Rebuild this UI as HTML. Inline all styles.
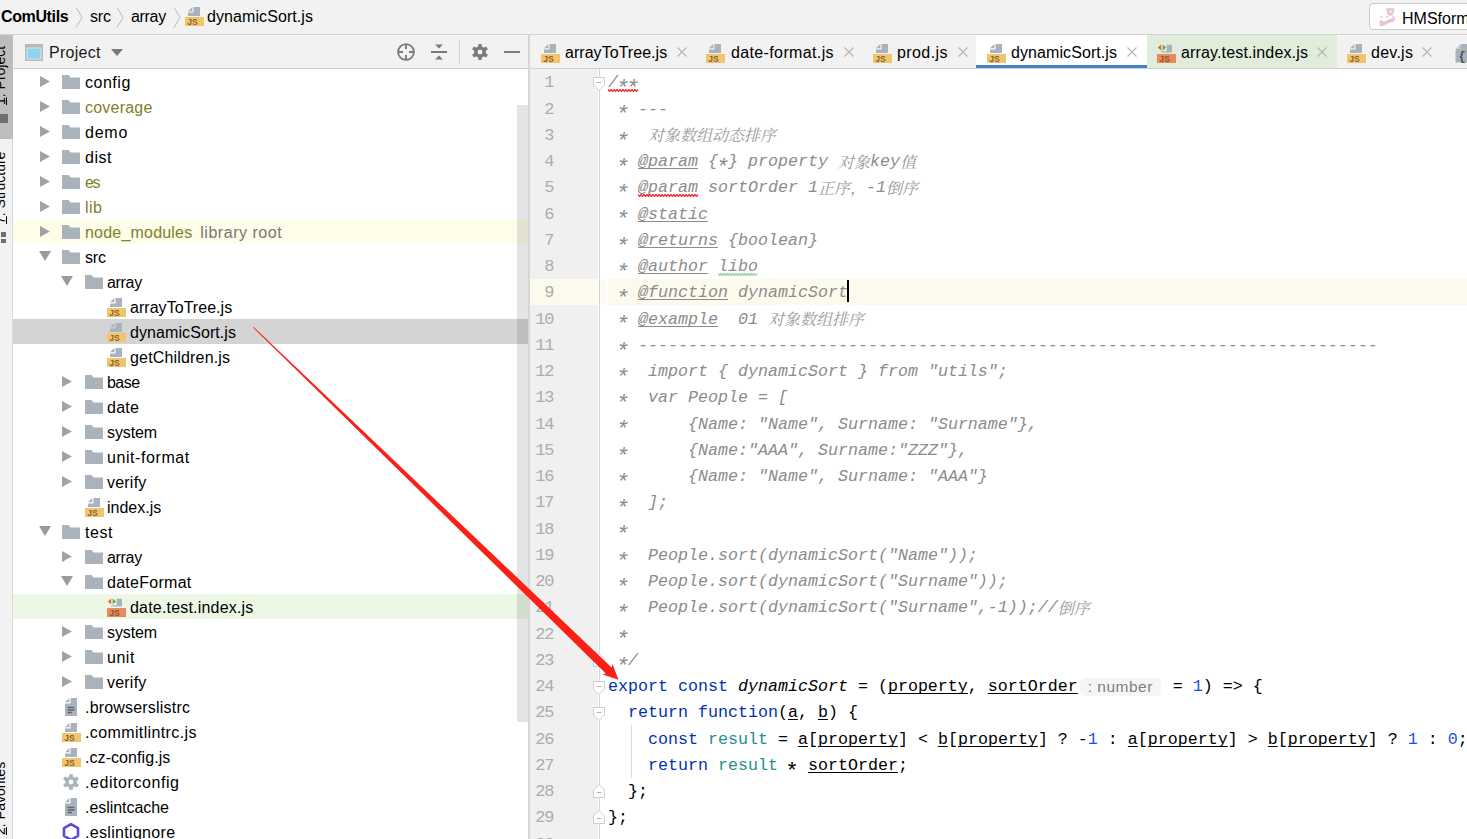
<!DOCTYPE html><html lang="zh"><head><meta charset="utf-8"><title>ComUtils - dynamicSort.js</title><style>
*{box-sizing:border-box;margin:0;padding:0}
html,body{width:1467px;height:839px;overflow:hidden;background:#fff}
body{position:relative;font-family:"Liberation Sans", "Noto Sans CJK SC", sans-serif;font-size:16px;color:#000}
.abs{position:absolute}
#top{left:0;top:0;width:1467px;height:35px;background:#f2f2f2;border-bottom:1px solid #d1d1d1}
#strip{left:0;top:35px;width:13px;height:804px;background:#f2f2f2;border-right:1px solid #dadada}
#strip .sel{left:0;top:0;width:13px;height:104px;background:#bdbdbd}
#phead{left:13px;top:35px;width:515px;height:34px;background:#f2f2f2;border-bottom:1px solid #d1d1d1}
#tree{left:13px;top:69px;width:515px;height:770px;background:#fff;overflow:hidden}
.row{position:absolute;left:0;width:515px;height:25px;line-height:25px;white-space:nowrap}
.row .t{position:absolute;top:0.8px;font-size:16px}
.olive{color:#80802d}
.gray{color:#787878}
#divider{left:528px;top:35px;width:2px;height:804px;background:#d6d6d6}
#tabs{left:530px;top:35px;width:937px;height:34px;background:#f2f2f2;border-bottom:1px solid #d1d1d1;overflow:hidden}
.tab{position:absolute;top:0;height:33px;line-height:33px;font-size:16px;white-space:nowrap}
.tab .x{position:absolute;top:0;color:#9a9a9a;font-size:15px}
#gutter{left:530px;top:69px;width:68px;height:770px;background:#f0f0f0}
#gline{left:599px;top:69px;width:1px;height:770px;background:#d4d4d4}
#code{left:530px;top:69px;width:937px;height:770px;overflow:hidden;font-family:"Liberation Mono", "Noto Serif CJK SC", monospace;font-size:16.667px}
.ln{position:absolute;left:0;width:23.3px;text-align:right;color:#adadad;font-size:17px;letter-spacing:-1.2px;height:26.25px;line-height:26.25px;white-space:pre}
.cl{position:absolute;left:78px;height:26.25px;line-height:26.25px;white-space:pre;color:#000}
.c{color:#8c8c8c;font-style:italic}
.cj{font-family:"Noto Serif CJK SC",serif;font-size:16px;font-style:italic;color:#9a9a9a;display:inline-block;text-align:center;vertical-align:baseline;line-height:20px;position:relative;top:1.5px}
.tag{text-decoration:underline;text-decoration-thickness:1px;text-underline-offset:2px;text-decoration-skip-ink:none}
.kw{color:#0033b3}
.num{color:#1750eb}
.lv{color:#248f8f}
.u{text-decoration:underline;text-decoration-thickness:1px;text-underline-offset:2px;text-decoration-skip-ink:none}
.fn{font-style:italic}
.hint{display:inline-block;width:81px;height:18px;margin:0 2px;background:#f5f5f5;border-radius:5px;font-family:"Liberation Sans", "Noto Sans CJK SC", sans-serif;font-size:15.5px;letter-spacing:0.5px;color:#7f7f7f;line-height:18.5px;height:18.5px;text-align:center;position:relative;top:0.6px;font-style:normal}
</style><style>
.wv-r{text-decoration:underline wavy #e8433a;text-decoration-thickness:1px;text-underline-offset:1.5px;text-decoration-skip-ink:none}
.tag.wv-r{text-decoration:underline wavy #e8433a;text-decoration-thickness:1px;text-underline-offset:1.5px}
.wv-g{text-decoration:underline wavy #8fc08a;text-decoration-thickness:1px;text-underline-offset:1.5px;text-decoration-skip-ink:none}
.as{font-size:22.5px;line-height:0;margin:0 -0.9px 0 -2.6px;position:relative;top:7.8px}
.caret{display:inline-block;width:2px;height:22px;background:#000;vertical-align:-5px;margin-left:-1px}
</style></head><body>
<div id="top" class="abs">
<span class="abs" style="left:1px;top:0;line-height:33px;font-weight:bold;font-size:16px;letter-spacing:-0.376px;">ComUtils</span>
<svg class="abs" style="left:75px;top:7px" width="8" height="21" viewBox="0 0 8 21"><path d="M1 0.5L7 10.5L1 20.5" fill="none" stroke="#b9b9b9" stroke-width="1"/></svg>
<span class="abs" style="left:90px;top:0;line-height:33px;font-size:16px;letter-spacing:-0.214px;">src</span>
<svg class="abs" style="left:116px;top:7px" width="8" height="21" viewBox="0 0 8 21"><path d="M1 0.5L7 10.5L1 20.5" fill="none" stroke="#b9b9b9" stroke-width="1"/></svg>
<span class="abs" style="left:131px;top:0;line-height:33px;font-size:16px;letter-spacing:-0.313px;">array</span>
<svg class="abs" style="left:173px;top:7px" width="8" height="21" viewBox="0 0 8 21"><path d="M1 0.5L7 10.5L1 20.5" fill="none" stroke="#b9b9b9" stroke-width="1"/></svg>
<svg class="abs" style="left:185px;top:7px" width="19" height="19" viewBox="0 0 19 19"><path d="M8.5 0H15V9H3V5.5H8.5z" fill="#aab3bb"/><path d="M7.3 0V4.3H3z" fill="#aab3bb"/><rect x="0" y="10" width="19" height="9" fill="#f2c46e"/><text x="2.2" y="17.6" font-family="Liberation Sans,sans-serif" font-weight="bold" font-size="8.5" fill="#6e5320" fill-opacity="0.85">JS</text></svg>
<span class="abs" style="left:207px;top:0;line-height:33px;font-size:16px;letter-spacing:0.083px;">dynamicSort.js</span>
<div class="abs" style="left:1369px;top:3px;width:110px;height:27px;background:#fff;border:1px solid #c9c9c9;border-radius:4px"></div>
<svg class="abs" style="left:1378.8px;top:7.9px" width="17" height="19" viewBox="0 0 17 19"><path d="M7.1 0.2H15.6L13.8 7.5H8.8z" fill="#e9c3d2"/><path d="M10.3 2.8H13L11.7 5.6z" fill="#fff"/><circle cx="2.3" cy="9" r="1.1" fill="#e9c3d2"/><circle cx="8.3" cy="9" r="1.1" fill="#e9c3d2"/><circle cx="14.2" cy="9" r="1.1" fill="#e9c3d2"/><path d="M0.5 15C0.5 12 2 11.3 3 12.5C4 14 6 14 8 12.2C10 10.5 13 10.8 16 9.6C16.6 13 14 14.2 11 14.7C8 15.2 6 17.6 3 18.1C1 18.4 0.3 17 0.5 15z" fill="#e9c3d2"/></svg>
<span class="abs" style="left:1402px;top:2px;line-height:33px;font-size:16px">HMSform</span>
</div>
<div id="strip" class="abs"><div class="sel abs"></div>
<div class="abs" style="left:-8px;top:70px;transform-origin:0 0;transform:rotate(-90deg);font-size:14px;white-space:nowrap;line-height:16px"><u>1</u>: Project</div>
<div class="abs" style="left:0;top:79px;width:8px;height:9px;background:#6e6e6e"></div>
<div class="abs" style="left:-8px;top:189px;transform-origin:0 0;transform:rotate(-90deg);font-size:14px;white-space:nowrap;line-height:16px"><u>7</u>: Structure</div>
<div class="abs" style="left:1px;top:197px;width:5px;height:4.5px;background:#6e6e6e"></div><div class="abs" style="left:1px;top:203.5px;width:5px;height:4.5px;background:#6e6e6e"></div>
<div class="abs" style="left:-8px;top:800px;transform-origin:0 0;transform:rotate(-90deg);font-size:14px;white-space:nowrap;line-height:16px"><u>2</u>: Favorites</div>
</div>
<div id="phead" class="abs">
<svg class="abs" style="left:12px;top:9px" width="18" height="17" viewBox="0 0 18 17"><rect x="0" y="0" width="18" height="17" fill="#b2bac1"/><rect x="1.5" y="3.5" width="15" height="12" fill="#dde5ea"/><rect x="2.5" y="4.5" width="13" height="10" fill="#8fd3ec"/></svg>
<span class="abs" style="left:36px;top:1px;line-height:34px;font-size:16px;color:#1a1a1a;letter-spacing:0.284px;">Project</span>
<svg class="abs" style="left:98px;top:14px" width="12" height="7" viewBox="0 0 12 7"><path d="M0 0H12L6 7z" fill="#7a7a7a"/></svg>
<svg class="abs" style="left:383px;top:7px" width="20" height="20" viewBox="0 0 20 20"><circle cx="10" cy="10" r="7.9" fill="none" stroke="#7a7a7a" stroke-width="1.8"/><path d="M10 2v5M10 13v5M2 10h5M13 10h5" stroke="#7a7a7a" stroke-width="1.9"/></svg>
<svg class="abs" style="left:418px;top:8px" width="16" height="18" viewBox="0 0 16 18"><path d="M0 9h16" stroke="#7a7a7a" stroke-width="2"/><path d="M4 1.5h8L8 5.5zM4 16.5h8L8 12.5z" fill="#7a7a7a"/></svg>
<div class="abs" style="left:446px;top:5px;width:1px;height:24px;background:#d1d1d1"></div>
<svg class="abs" style="left:459px;top:9px" width="16" height="16" viewBox="0 0 16 16"><path d="M6.58 0.13L9.42 0.13L9.56 2.62L11.88 3.96L14.11 2.84L15.53 5.29L13.44 6.66L13.44 9.34L15.53 10.71L14.11 13.16L11.88 12.04L9.56 13.38L9.42 15.87L6.58 15.87L6.44 13.38L4.12 12.04L1.89 13.16L0.47 10.71L2.56 9.34L2.56 6.66L0.47 5.29L1.89 2.84L4.12 3.96L6.44 2.62zM8 5.3a2.7 2.7 0 1 0 0.001 0z" fill="#7a7a7a" fill-rule="evenodd" stroke="#7a7a7a" stroke-width="0.6" stroke-linejoin="round"/></svg>
<div class="abs" style="left:491px;top:16px;width:16px;height:2px;background:#7a7a7a"></div>
</div>
<div id="tree" class="abs">
<div class="row" style="top:0px;">
<svg class="abs" style="left:27px;top:7px" width="10" height="11" viewBox="0 0 10 11"><path d="M0 0L10 5.5L0 11z" fill="#a2a2a2"/></svg>
<svg class="abs" style="left:49px;top:6px" width="18" height="14" viewBox="0 0 18 14"><path d="M0 0h6.5l2 2.5H18V14H0z" fill="#aab3bb"/></svg>
<span class="t " style="left:72px;letter-spacing:0.519px;">config</span>
</div>
<div class="row" style="top:25px;">
<svg class="abs" style="left:27px;top:7px" width="10" height="11" viewBox="0 0 10 11"><path d="M0 0L10 5.5L0 11z" fill="#a2a2a2"/></svg>
<svg class="abs" style="left:49px;top:6px" width="18" height="14" viewBox="0 0 18 14"><path d="M0 0h6.5l2 2.5H18V14H0z" fill="#aab3bb"/></svg>
<span class="t olive" style="left:72px;letter-spacing:0.210px;">coverage</span>
</div>
<div class="row" style="top:50px;">
<svg class="abs" style="left:27px;top:7px" width="10" height="11" viewBox="0 0 10 11"><path d="M0 0L10 5.5L0 11z" fill="#a2a2a2"/></svg>
<svg class="abs" style="left:49px;top:6px" width="18" height="14" viewBox="0 0 18 14"><path d="M0 0h6.5l2 2.5H18V14H0z" fill="#aab3bb"/></svg>
<span class="t " style="left:72px;letter-spacing:0.756px;">demo</span>
</div>
<div class="row" style="top:75px;">
<svg class="abs" style="left:27px;top:7px" width="10" height="11" viewBox="0 0 10 11"><path d="M0 0L10 5.5L0 11z" fill="#a2a2a2"/></svg>
<svg class="abs" style="left:49px;top:6px" width="18" height="14" viewBox="0 0 18 14"><path d="M0 0h6.5l2 2.5H18V14H0z" fill="#aab3bb"/></svg>
<span class="t " style="left:72px;letter-spacing:0.531px;">dist</span>
</div>
<div class="row" style="top:100px;">
<svg class="abs" style="left:27px;top:7px" width="10" height="11" viewBox="0 0 10 11"><path d="M0 0L10 5.5L0 11z" fill="#a2a2a2"/></svg>
<svg class="abs" style="left:49px;top:6px" width="18" height="14" viewBox="0 0 18 14"><path d="M0 0h6.5l2 2.5H18V14H0z" fill="#aab3bb"/></svg>
<span class="t olive" style="left:72px;letter-spacing:-1.406px;">es</span>
</div>
<div class="row" style="top:125px;">
<svg class="abs" style="left:27px;top:7px" width="10" height="11" viewBox="0 0 10 11"><path d="M0 0L10 5.5L0 11z" fill="#a2a2a2"/></svg>
<svg class="abs" style="left:49px;top:6px" width="18" height="14" viewBox="0 0 18 14"><path d="M0 0h6.5l2 2.5H18V14H0z" fill="#aab3bb"/></svg>
<span class="t olive" style="left:72px;letter-spacing:0.492px;">lib</span>
</div>
<div class="row" style="top:150px;background:#fdfde9;">
<svg class="abs" style="left:27px;top:7px" width="10" height="11" viewBox="0 0 10 11"><path d="M0 0L10 5.5L0 11z" fill="#a2a2a2"/></svg>
<svg class="abs" style="left:49px;top:6px" width="18" height="14" viewBox="0 0 18 14"><path d="M0 0h6.5l2 2.5H18V14H0z" fill="#aab3bb"/></svg>
<span class="t olive" style="left:72px;letter-spacing:0.203px;">node_modules<span class="gray abs" style="left:115.3px;top:0;letter-spacing:0.520px;">library root</span></span>
</div>
<div class="row" style="top:175px;">
<svg class="abs" style="left:26px;top:7px" width="12" height="10" viewBox="0 0 12 10"><path d="M0 0H12L6 10z" fill="#9a9a9a"/></svg>
<svg class="abs" style="left:49px;top:6px" width="18" height="14" viewBox="0 0 18 14"><path d="M0 0h6.5l2 2.5H18V14H0z" fill="#aab3bb"/></svg>
<span class="t " style="left:72px;letter-spacing:-0.214px;">src</span>
</div>
<div class="row" style="top:200px;">
<svg class="abs" style="left:48px;top:7px" width="12" height="10" viewBox="0 0 12 10"><path d="M0 0H12L6 10z" fill="#9a9a9a"/></svg>
<svg class="abs" style="left:72px;top:6px" width="18" height="14" viewBox="0 0 18 14"><path d="M0 0h6.5l2 2.5H18V14H0z" fill="#aab3bb"/></svg>
<span class="t " style="left:94px;letter-spacing:-0.313px;">array</span>
</div>
<div class="row" style="top:225px;">
<svg class="abs" style="left:94px;top:4px" width="19" height="19" viewBox="0 0 19 19"><path d="M8.5 0H15V9H3V5.5H8.5z" fill="#aab3bb"/><path d="M7.3 0V4.3H3z" fill="#aab3bb"/><rect x="0" y="10" width="19" height="9" fill="#f2c46e"/><text x="2.2" y="17.6" font-family="Liberation Sans,sans-serif" font-weight="bold" font-size="8.5" fill="#6e5320" fill-opacity="0.85">JS</text></svg>
<span class="t " style="left:117px;letter-spacing:0.042px;">arrayToTree.js</span>
</div>
<div class="row" style="top:250px;background:#d4d4d4;">
<svg class="abs" style="left:94px;top:4px" width="19" height="19" viewBox="0 0 19 19"><path d="M8.5 0H15V9H3V5.5H8.5z" fill="#aab3bb"/><path d="M7.3 0V4.3H3z" fill="#aab3bb"/><rect x="0" y="10" width="19" height="9" fill="#f2c46e"/><text x="2.2" y="17.6" font-family="Liberation Sans,sans-serif" font-weight="bold" font-size="8.5" fill="#6e5320" fill-opacity="0.85">JS</text></svg>
<span class="t " style="left:117px;letter-spacing:0.083px;">dynamicSort.js</span>
</div>
<div class="row" style="top:275px;">
<svg class="abs" style="left:94px;top:4px" width="19" height="19" viewBox="0 0 19 19"><path d="M8.5 0H15V9H3V5.5H8.5z" fill="#aab3bb"/><path d="M7.3 0V4.3H3z" fill="#aab3bb"/><rect x="0" y="10" width="19" height="9" fill="#f2c46e"/><text x="2.2" y="17.6" font-family="Liberation Sans,sans-serif" font-weight="bold" font-size="8.5" fill="#6e5320" fill-opacity="0.85">JS</text></svg>
<span class="t " style="left:117px;letter-spacing:0.175px;">getChildren.js</span>
</div>
<div class="row" style="top:300px;">
<svg class="abs" style="left:49px;top:7px" width="10" height="11" viewBox="0 0 10 11"><path d="M0 0L10 5.5L0 11z" fill="#a2a2a2"/></svg>
<svg class="abs" style="left:72px;top:6px" width="18" height="14" viewBox="0 0 18 14"><path d="M0 0h6.5l2 2.5H18V14H0z" fill="#aab3bb"/></svg>
<span class="t " style="left:94px;letter-spacing:-0.534px;">base</span>
</div>
<div class="row" style="top:325px;">
<svg class="abs" style="left:49px;top:7px" width="10" height="11" viewBox="0 0 10 11"><path d="M0 0L10 5.5L0 11z" fill="#a2a2a2"/></svg>
<svg class="abs" style="left:72px;top:6px" width="18" height="14" viewBox="0 0 18 14"><path d="M0 0h6.5l2 2.5H18V14H0z" fill="#aab3bb"/></svg>
<span class="t " style="left:94px;letter-spacing:0.253px;">date</span>
</div>
<div class="row" style="top:350px;">
<svg class="abs" style="left:49px;top:7px" width="10" height="11" viewBox="0 0 10 11"><path d="M0 0L10 5.5L0 11z" fill="#a2a2a2"/></svg>
<svg class="abs" style="left:72px;top:6px" width="18" height="14" viewBox="0 0 18 14"><path d="M0 0h6.5l2 2.5H18V14H0z" fill="#aab3bb"/></svg>
<span class="t " style="left:94px;letter-spacing:-0.114px;">system</span>
</div>
<div class="row" style="top:375px;">
<svg class="abs" style="left:49px;top:7px" width="10" height="11" viewBox="0 0 10 11"><path d="M0 0L10 5.5L0 11z" fill="#a2a2a2"/></svg>
<svg class="abs" style="left:72px;top:6px" width="18" height="14" viewBox="0 0 18 14"><path d="M0 0h6.5l2 2.5H18V14H0z" fill="#aab3bb"/></svg>
<span class="t " style="left:94px;letter-spacing:0.573px;">unit-format</span>
</div>
<div class="row" style="top:400px;">
<svg class="abs" style="left:49px;top:7px" width="10" height="11" viewBox="0 0 10 11"><path d="M0 0L10 5.5L0 11z" fill="#a2a2a2"/></svg>
<svg class="abs" style="left:72px;top:6px" width="18" height="14" viewBox="0 0 18 14"><path d="M0 0h6.5l2 2.5H18V14H0z" fill="#aab3bb"/></svg>
<span class="t " style="left:94px;letter-spacing:0.213px;">verify</span>
</div>
<div class="row" style="top:425px;">
<svg class="abs" style="left:72px;top:4px" width="19" height="19" viewBox="0 0 19 19"><path d="M8.5 0H15V9H3V5.5H8.5z" fill="#aab3bb"/><path d="M7.3 0V4.3H3z" fill="#aab3bb"/><rect x="0" y="10" width="19" height="9" fill="#f2c46e"/><text x="2.2" y="17.6" font-family="Liberation Sans,sans-serif" font-weight="bold" font-size="8.5" fill="#6e5320" fill-opacity="0.85">JS</text></svg>
<span class="t " style="left:94px;letter-spacing:-0.007px;">index.js</span>
</div>
<div class="row" style="top:450px;">
<svg class="abs" style="left:26px;top:7px" width="12" height="10" viewBox="0 0 12 10"><path d="M0 0H12L6 10z" fill="#9a9a9a"/></svg>
<svg class="abs" style="left:49px;top:6px" width="18" height="14" viewBox="0 0 18 14"><path d="M0 0h6.5l2 2.5H18V14H0z" fill="#aab3bb"/></svg>
<span class="t " style="left:72px;letter-spacing:0.534px;">test</span>
</div>
<div class="row" style="top:475px;">
<svg class="abs" style="left:49px;top:7px" width="10" height="11" viewBox="0 0 10 11"><path d="M0 0L10 5.5L0 11z" fill="#a2a2a2"/></svg>
<svg class="abs" style="left:72px;top:6px" width="18" height="14" viewBox="0 0 18 14"><path d="M0 0h6.5l2 2.5H18V14H0z" fill="#aab3bb"/></svg>
<span class="t " style="left:94px;letter-spacing:-0.313px;">array</span>
</div>
<div class="row" style="top:500px;">
<svg class="abs" style="left:48px;top:7px" width="12" height="10" viewBox="0 0 12 10"><path d="M0 0H12L6 10z" fill="#9a9a9a"/></svg>
<svg class="abs" style="left:72px;top:6px" width="18" height="14" viewBox="0 0 18 14"><path d="M0 0h6.5l2 2.5H18V14H0z" fill="#aab3bb"/></svg>
<span class="t " style="left:94px;letter-spacing:0.276px;">dateFormat</span>
</div>
<div class="row" style="top:525px;background:#edf7e6;">
<svg class="abs" style="left:94px;top:4px" width="19" height="19" viewBox="0 0 19 19"><path d="M9.7 0.8H15V8.6H4.3V7.3H9.7z" fill="#aab3bb"/><path d="M4.2 0.4V6.6L0.8 3.5z" fill="#e2643a"/><path d="M5.6 0.4V6.6L9.2 3.5z" fill="#5fae4a"/><rect x="0" y="10" width="19" height="9" fill="#ea8a5c"/><text x="2.2" y="17.6" font-family="Liberation Sans,sans-serif" font-weight="bold" font-size="8.5" fill="#6e5320" fill-opacity="0.85">JS</text></svg>
<span class="t " style="left:117px;letter-spacing:0.190px;">date.test.index.js</span>
</div>
<div class="row" style="top:550px;">
<svg class="abs" style="left:49px;top:7px" width="10" height="11" viewBox="0 0 10 11"><path d="M0 0L10 5.5L0 11z" fill="#a2a2a2"/></svg>
<svg class="abs" style="left:72px;top:6px" width="18" height="14" viewBox="0 0 18 14"><path d="M0 0h6.5l2 2.5H18V14H0z" fill="#aab3bb"/></svg>
<span class="t " style="left:94px;letter-spacing:-0.114px;">system</span>
</div>
<div class="row" style="top:575px;">
<svg class="abs" style="left:49px;top:7px" width="10" height="11" viewBox="0 0 10 11"><path d="M0 0L10 5.5L0 11z" fill="#a2a2a2"/></svg>
<svg class="abs" style="left:72px;top:6px" width="18" height="14" viewBox="0 0 18 14"><path d="M0 0h6.5l2 2.5H18V14H0z" fill="#aab3bb"/></svg>
<span class="t " style="left:94px;letter-spacing:0.534px;">unit</span>
</div>
<div class="row" style="top:600px;">
<svg class="abs" style="left:49px;top:7px" width="10" height="11" viewBox="0 0 10 11"><path d="M0 0L10 5.5L0 11z" fill="#a2a2a2"/></svg>
<svg class="abs" style="left:72px;top:6px" width="18" height="14" viewBox="0 0 18 14"><path d="M0 0h6.5l2 2.5H18V14H0z" fill="#aab3bb"/></svg>
<span class="t " style="left:94px;letter-spacing:0.213px;">verify</span>
</div>
<div class="row" style="top:625px;">
<svg class="abs" style="left:51px;top:4px" width="14" height="18" viewBox="0 0 14 18"><path d="M6.5 0H13V18H1V5.5H6.5z" fill="#aab3bb"/><path d="M5.3 0V4.3H1z" fill="#aab3bb"/><path d="M3.5 9.5h7M3.5 12h7M3.5 14.5h4.5" stroke="#5f6670" stroke-width="1.3"/></svg>
<span class="t " style="left:72px;letter-spacing:0.190px;">.browserslistrc</span>
</div>
<div class="row" style="top:650px;">
<svg class="abs" style="left:49px;top:4px" width="19" height="19" viewBox="0 0 19 19"><path d="M8.5 0H15V9H3V5.5H8.5z" fill="#aab3bb"/><path d="M7.3 0V4.3H3z" fill="#aab3bb"/><rect x="0" y="10" width="19" height="9" fill="#f2c46e"/><text x="2.2" y="17.6" font-family="Liberation Sans,sans-serif" font-weight="bold" font-size="8.5" fill="#6e5320" fill-opacity="0.85">JS</text></svg>
<span class="t " style="left:72px;letter-spacing:0.375px;">.commitlintrc.js</span>
</div>
<div class="row" style="top:675px;">
<svg class="abs" style="left:49px;top:4px" width="19" height="19" viewBox="0 0 19 19"><path d="M8.5 0H15V9H3V5.5H8.5z" fill="#aab3bb"/><path d="M7.3 0V4.3H3z" fill="#aab3bb"/><rect x="0" y="10" width="19" height="9" fill="#f2c46e"/><text x="2.2" y="17.6" font-family="Liberation Sans,sans-serif" font-weight="bold" font-size="8.5" fill="#6e5320" fill-opacity="0.85">JS</text></svg>
<span class="t " style="left:72px;letter-spacing:0.069px;">.cz-config.js</span>
</div>
<div class="row" style="top:700px;">
<svg class="abs" style="left:50px;top:5px" width="16" height="16" viewBox="0 0 16 16"><path d="M6.58 0.13L9.42 0.13L9.56 2.62L11.88 3.96L14.11 2.84L15.53 5.29L13.44 6.66L13.44 9.34L15.53 10.71L14.11 13.16L11.88 12.04L9.56 13.38L9.42 15.87L6.58 15.87L6.44 13.38L4.12 12.04L1.89 13.16L0.47 10.71L2.56 9.34L2.56 6.66L0.47 5.29L1.89 2.84L4.12 3.96L6.44 2.62zM8 5.3a2.7 2.7 0 1 0 0.001 0z" fill="#aab3bb" fill-rule="evenodd" stroke="#aab3bb" stroke-width="0.6" stroke-linejoin="round"/></svg>
<span class="t " style="left:72px;letter-spacing:0.569px;">.editorconfig</span>
</div>
<div class="row" style="top:725px;">
<svg class="abs" style="left:51px;top:4px" width="14" height="18" viewBox="0 0 14 18"><path d="M6.5 0H13V18H1V5.5H6.5z" fill="#aab3bb"/><path d="M5.3 0V4.3H1z" fill="#aab3bb"/><path d="M3.5 9.5h7M3.5 12h7M3.5 14.5h4.5" stroke="#5f6670" stroke-width="1.3"/></svg>
<span class="t " style="left:72px;letter-spacing:-0.045px;">.eslintcache</span>
</div>
<div class="row" style="top:750px;">
<svg class="abs" style="left:49px;top:4px" width="18" height="18" viewBox="0 0 18 18"><path d="M9 1.2L16 5.1V12.9L9 16.8L2 12.9V5.1z" fill="#fff" stroke="#5a4bd6" stroke-width="2.6" stroke-linejoin="round"/></svg>
<span class="t " style="left:72px;letter-spacing:0.318px;">.eslintignore</span>
</div>
<div class="abs" style="left:503.5px;top:36px;width:11.5px;height:617px;background:rgba(0,0,0,0.105)"></div>
</div>
<div id="divider" class="abs"></div>
<div id="tabs" class="abs">
<div class="tab" style="left:0px;width:165px;">
<svg class="abs" style="left:11px;top:9px" width="19" height="19" viewBox="0 0 19 19"><path d="M8.5 0H15V9H3V5.5H8.5z" fill="#aab3bb"/><path d="M7.3 0V4.3H3z" fill="#aab3bb"/><rect x="0" y="10" width="19" height="9" fill="#f2c46e"/><text x="2.2" y="17.6" font-family="Liberation Sans,sans-serif" font-weight="bold" font-size="8.5" fill="#6e5320" fill-opacity="0.85">JS</text></svg>
<span class="abs" style="left:35px;top:1px;letter-spacing:0.042px;">arrayToTree.js</span>
<svg class="abs" style="left:147px;top:12px" width="10" height="10" viewBox="0 0 10 10"><path d="M0.5 0.5L9.5 9.5M9.5 0.5L0.5 9.5" stroke="#b3b3b3" stroke-width="1.1"/></svg>
</div>
<div class="tab" style="left:165px;width:167px;">
<svg class="abs" style="left:11px;top:9px" width="19" height="19" viewBox="0 0 19 19"><path d="M8.5 0H15V9H3V5.5H8.5z" fill="#aab3bb"/><path d="M7.3 0V4.3H3z" fill="#aab3bb"/><rect x="0" y="10" width="19" height="9" fill="#f2c46e"/><text x="2.2" y="17.6" font-family="Liberation Sans,sans-serif" font-weight="bold" font-size="8.5" fill="#6e5320" fill-opacity="0.85">JS</text></svg>
<span class="abs" style="left:36px;top:1px;letter-spacing:0.368px;">date-format.js</span>
<svg class="abs" style="left:149px;top:12px" width="10" height="10" viewBox="0 0 10 10"><path d="M0.5 0.5L9.5 9.5M9.5 0.5L0.5 9.5" stroke="#b3b3b3" stroke-width="1.1"/></svg>
</div>
<div class="tab" style="left:332px;width:114px;">
<svg class="abs" style="left:11px;top:9px" width="19" height="19" viewBox="0 0 19 19"><path d="M8.5 0H15V9H3V5.5H8.5z" fill="#aab3bb"/><path d="M7.3 0V4.3H3z" fill="#aab3bb"/><rect x="0" y="10" width="19" height="9" fill="#f2c46e"/><text x="2.2" y="17.6" font-family="Liberation Sans,sans-serif" font-weight="bold" font-size="8.5" fill="#6e5320" fill-opacity="0.85">JS</text></svg>
<span class="abs" style="left:35px;top:1px;letter-spacing:0.411px;">prod.js</span>
<svg class="abs" style="left:96px;top:12px" width="10" height="10" viewBox="0 0 10 10"><path d="M0.5 0.5L9.5 9.5M9.5 0.5L0.5 9.5" stroke="#b3b3b3" stroke-width="1.1"/></svg>
</div>
<div class="tab" style="left:446px;width:171px;background:#fff;">
<svg class="abs" style="left:11px;top:9px" width="19" height="19" viewBox="0 0 19 19"><path d="M8.5 0H15V9H3V5.5H8.5z" fill="#aab3bb"/><path d="M7.3 0V4.3H3z" fill="#aab3bb"/><rect x="0" y="10" width="19" height="9" fill="#f2c46e"/><text x="2.2" y="17.6" font-family="Liberation Sans,sans-serif" font-weight="bold" font-size="8.5" fill="#6e5320" fill-opacity="0.85">JS</text></svg>
<span class="abs" style="left:35px;top:1px;letter-spacing:0.083px;">dynamicSort.js</span>
<svg class="abs" style="left:151px;top:12px" width="10" height="10" viewBox="0 0 10 10"><path d="M0.5 0.5L9.5 9.5M9.5 0.5L0.5 9.5" stroke="#b3b3b3" stroke-width="1.1"/></svg>
<div class="abs" style="left:0;bottom:-1px;width:100%;height:4px;background:#4083c9"></div>
</div>
<div class="tab" style="left:617px;width:190px;background:#e1ecdb;">
<svg class="abs" style="left:10px;top:9px" width="19" height="19" viewBox="0 0 19 19"><path d="M9.7 0.8H15V8.6H4.3V7.3H9.7z" fill="#aab3bb"/><path d="M4.2 0.4V6.6L0.8 3.5z" fill="#e2643a"/><path d="M5.6 0.4V6.6L9.2 3.5z" fill="#5fae4a"/><rect x="0" y="10" width="19" height="9" fill="#ea8a5c"/><text x="2.2" y="17.6" font-family="Liberation Sans,sans-serif" font-weight="bold" font-size="8.5" fill="#6e5320" fill-opacity="0.85">JS</text></svg>
<span class="abs" style="left:34px;top:1px;letter-spacing:0.150px;">array.test.index.js</span>
<svg class="abs" style="left:170px;top:12px" width="10" height="10" viewBox="0 0 10 10"><path d="M0.5 0.5L9.5 9.5M9.5 0.5L0.5 9.5" stroke="#b3b3b3" stroke-width="1.1"/></svg>
</div>
<div class="tab" style="left:807px;width:108px;">
<svg class="abs" style="left:10px;top:9px" width="19" height="19" viewBox="0 0 19 19"><path d="M8.5 0H15V9H3V5.5H8.5z" fill="#aab3bb"/><path d="M7.3 0V4.3H3z" fill="#aab3bb"/><rect x="0" y="10" width="19" height="9" fill="#f2c46e"/><text x="2.2" y="17.6" font-family="Liberation Sans,sans-serif" font-weight="bold" font-size="8.5" fill="#6e5320" fill-opacity="0.85">JS</text></svg>
<span class="abs" style="left:34px;top:1px;letter-spacing:0.258px;">dev.js</span>
<svg class="abs" style="left:85px;top:12px" width="10" height="10" viewBox="0 0 10 10"><path d="M0.5 0.5L9.5 9.5M9.5 0.5L0.5 9.5" stroke="#b3b3b3" stroke-width="1.1"/></svg>
</div>
<svg class="abs" style="left:925px;top:9px" width="19" height="19" viewBox="0 0 19 19"><path d="M6.5 0H16V18.5H0.5V6z" fill="#aab3bb"/><path d="M5.5 0V5H0.5z" fill="#c3cad0"/><text x="3.5" y="15.5" font-size="12" font-family="Liberation Mono,monospace" font-weight="bold" fill="#4a4f55">{}</text></svg>
</div>
<div id="gutter" class="abs"></div><div id="gline" class="abs"></div>
<div id="code" class="abs">
<div class="abs" style="left:0;top:210.30px;width:68px;height:25.65px;background:#fcfaed"></div>
<div class="abs" style="left:70px;top:210.30px;width:7px;height:25.65px;background:#fdfcf3"></div>
<div class="abs" style="left:78px;top:210.30px;width:900px;height:25.65px;background:#fcfaed"></div>
<div class="ln" style="top:1.40px">1</div>
<div class="cl" style="top:1.40px"><span class="c">/<span class="as">*</span><span class="as">*</span></span></div>
<div class="ln" style="top:27.65px">2</div>
<div class="cl" style="top:27.65px"><span class="c"> <span class="as">*</span> ---</span></div>
<div class="ln" style="top:53.90px">3</div>
<div class="cl" style="top:53.90px"><span class="c"> <span class="as">*</span>  <span class="cj" style="width:128px">对象数组动态排序</span></span></div>
<div class="ln" style="top:80.15px">4</div>
<div class="cl" style="top:80.15px"><span class="c"> <span class="as">*</span> <span class="tag">@param</span> {<span class="as">*</span>} property <span class="cj" style="width:32px">对象</span>key<span class="cj" style="width:16px">值</span></span></div>
<div class="ln" style="top:106.40px">5</div>
<div class="cl" style="top:106.40px"><span class="c"> <span class="as">*</span> <span class="tag" style="text-decoration:none">@param</span> sortOrder 1<span class="cj" style="width:48px">正序，</span>-1<span class="cj" style="width:32px">倒序</span></span></div>
<div class="ln" style="top:132.65px">6</div>
<div class="cl" style="top:132.65px"><span class="c"> <span class="as">*</span> <span class="tag">@static</span></span></div>
<div class="ln" style="top:158.90px">7</div>
<div class="cl" style="top:158.90px"><span class="c"> <span class="as">*</span> <span class="tag">@returns</span> {boolean}</span></div>
<div class="ln" style="top:185.15px">8</div>
<div class="cl" style="top:185.15px"><span class="c"> <span class="as">*</span> <span class="tag">@author</span> libo</span></div>
<div class="ln" style="top:211.40px">9</div>
<div class="cl" style="top:211.40px"><span class="c"> <span class="as">*</span> <span class="tag">@function</span> dynamicSort</span><span class="caret"></span></div>
<div class="ln" style="top:237.65px">10</div>
<div class="cl" style="top:237.65px"><span class="c"> <span class="as">*</span> <span class="tag">@example</span>  01 <span class="cj" style="width:96px">对象数组排序</span></span></div>
<div class="ln" style="top:263.90px">11</div>
<div class="cl" style="top:263.90px"><span class="c"> <span class="as">*</span> --------------------------------------------------------------------------</span></div>
<div class="ln" style="top:290.15px">12</div>
<div class="cl" style="top:290.15px"><span class="c"> <span class="as">*</span>  import { dynamicSort } from "utils";</span></div>
<div class="ln" style="top:316.40px">13</div>
<div class="cl" style="top:316.40px"><span class="c"> <span class="as">*</span>  var People = [</span></div>
<div class="ln" style="top:342.65px">14</div>
<div class="cl" style="top:342.65px"><span class="c"> <span class="as">*</span>      {Name: "Name", Surname: "Surname"},</span></div>
<div class="ln" style="top:368.90px">15</div>
<div class="cl" style="top:368.90px"><span class="c"> <span class="as">*</span>      {Name:"AAA", Surname:"ZZZ"},</span></div>
<div class="ln" style="top:395.15px">16</div>
<div class="cl" style="top:395.15px"><span class="c"> <span class="as">*</span>      {Name: "Name", Surname: "AAA"}</span></div>
<div class="ln" style="top:421.40px">17</div>
<div class="cl" style="top:421.40px"><span class="c"> <span class="as">*</span>  ];</span></div>
<div class="ln" style="top:447.65px">18</div>
<div class="cl" style="top:447.65px"><span class="c"> <span class="as">*</span></span></div>
<div class="ln" style="top:473.90px">19</div>
<div class="cl" style="top:473.90px"><span class="c"> <span class="as">*</span>  People.sort(dynamicSort("Name"));</span></div>
<div class="ln" style="top:500.15px">20</div>
<div class="cl" style="top:500.15px"><span class="c"> <span class="as">*</span>  People.sort(dynamicSort("Surname"));</span></div>
<div class="ln" style="top:526.40px">21</div>
<div class="cl" style="top:526.40px"><span class="c"> <span class="as">*</span>  People.sort(dynamicSort("Surname",-1));//<span class="cj" style="width:32px">倒序</span></span></div>
<div class="ln" style="top:552.65px">22</div>
<div class="cl" style="top:552.65px"><span class="c"> <span class="as">*</span></span></div>
<div class="ln" style="top:578.90px">23</div>
<div class="cl" style="top:578.90px"><span class="c"> <span class="as">*</span>/</span></div>
<div class="ln" style="top:605.15px">24</div>
<div class="cl" style="top:605.15px"><span class="kw">export const</span> <span class="fn">dynamicSort</span> = (<span class="u">property</span>, <span class="u">sortOrder</span><span class="hint">: number</span> = <span class="num">1</span>) =&gt; {</div>
<div class="ln" style="top:631.40px">25</div>
<div class="cl" style="top:631.40px">  <span class="kw">return function</span>(<span class="u">a</span>, <span class="u">b</span>) {</div>
<div class="ln" style="top:657.65px">26</div>
<div class="cl" style="top:657.65px">    <span class="kw">const</span> <span class="lv">result</span> = <span class="u">a</span>[<span class="u">property</span>] &lt; <span class="u">b</span>[<span class="u">property</span>] ? -<span class="num">1</span> : <span class="u">a</span>[<span class="u">property</span>] &gt; <span class="u">b</span>[<span class="u">property</span>] ? <span class="num">1</span> : <span class="num">0</span>;</div>
<div class="ln" style="top:683.90px">27</div>
<div class="cl" style="top:683.90px">    <span class="kw">return</span> <span class="lv">result</span> <span class="as" style="font-style:normal">*</span> <span class="u">sortOrder</span>;</div>
<div class="ln" style="top:710.15px">28</div>
<div class="cl" style="top:710.15px">  };</div>
<div class="ln" style="top:736.40px">29</div>
<div class="cl" style="top:736.40px">};</div>
<div class="ln" style="top:762.65px">30</div>
<div class="cl" style="top:762.65px"></div>
<div class="abs" style="left:101px;top:656.25px;width:1px;height:52.50px;background:#dcdcdc"></div>
<svg class="abs" style="left:78.0px;top:20.40px" width="30" height="3" viewBox="0 0 30 3"><polyline points="0.0,0.3 1.5,2.7 3.0,0.3 4.5,2.7 6.0,0.3 7.5,2.7 9.0,0.3 10.5,2.7 12.0,0.3 13.5,2.7 15.0,0.3 16.5,2.7 18.0,0.3 19.5,2.7 21.0,0.3 22.5,2.7 24.0,0.3 25.5,2.7 27.0,0.3 28.5,2.7 30.0,0.3" fill="none" stroke="#f0312b" stroke-width="1.25"/></svg>
<svg class="abs" style="left:108.0px;top:125.40px" width="60" height="3" viewBox="0 0 60 3"><polyline points="0.0,0.3 1.5,2.7 3.0,0.3 4.5,2.7 6.0,0.3 7.5,2.7 9.0,0.3 10.5,2.7 12.0,0.3 13.5,2.7 15.0,0.3 16.5,2.7 18.0,0.3 19.5,2.7 21.0,0.3 22.5,2.7 24.0,0.3 25.5,2.7 27.0,0.3 28.5,2.7 30.0,0.3 31.5,2.7 33.0,0.3 34.5,2.7 36.0,0.3 37.5,2.7 39.0,0.3 40.5,2.7 42.0,0.3 43.5,2.7 45.0,0.3 46.5,2.7 48.0,0.3 49.5,2.7 51.0,0.3 52.5,2.7 54.0,0.3 55.5,2.7 57.0,0.3 58.5,2.7 60.0,0.3" fill="none" stroke="#f0312b" stroke-width="1.25"/></svg>
<svg class="abs" style="left:188.0px;top:204.15px" width="40" height="3" viewBox="0 0 40 3"><polyline points="0.0,0.3 1.5,2.7 3.0,0.3 4.5,2.7 6.0,0.3 7.5,2.7 9.0,0.3 10.5,2.7 12.0,0.3 13.5,2.7 15.0,0.3 16.5,2.7 18.0,0.3 19.5,2.7 21.0,0.3 22.5,2.7 24.0,0.3 25.5,2.7 27.0,0.3 28.5,2.7 30.0,0.3 31.5,2.7 33.0,0.3 34.5,2.7 36.0,0.3 37.5,2.7 39.0,0.3" fill="none" stroke="#a5cf9c" stroke-width="1.25"/></svg>
<svg class="abs" style="left:63px;top:8.00px" width="12" height="14" viewBox="0 0 12 14"><path d="M0.5 0.5H11.5V8L6 13.5L0.5 8z" fill="#fff" stroke="#cdcdcd"/><path d="M3.5 5.5H8.5" stroke="#b8b8b8"/></svg>
<svg class="abs" style="left:63px;top:611.75px" width="12" height="14" viewBox="0 0 12 14"><path d="M0.5 0.5H11.5V8L6 13.5L0.5 8z" fill="#fff" stroke="#cdcdcd"/><path d="M3.5 5.5H8.5" stroke="#b8b8b8"/></svg>
<svg class="abs" style="left:63px;top:638.00px" width="12" height="14" viewBox="0 0 12 14"><path d="M0.5 0.5H11.5V8L6 13.5L0.5 8z" fill="#fff" stroke="#cdcdcd"/><path d="M3.5 5.5H8.5" stroke="#b8b8b8"/></svg>
<svg class="abs" style="left:63px;top:583.50px" width="12" height="14" viewBox="0 0 12 14"><path d="M0.5 13.5H11.5V6L6 0.5L0.5 6z" fill="#fff" stroke="#cdcdcd"/><path d="M3.5 8.5H8.5" stroke="#b8b8b8"/></svg>
<svg class="abs" style="left:63px;top:714.75px" width="12" height="14" viewBox="0 0 12 14"><path d="M0.5 13.5H11.5V6L6 0.5L0.5 6z" fill="#fff" stroke="#cdcdcd"/><path d="M3.5 8.5H8.5" stroke="#b8b8b8"/></svg>
<svg class="abs" style="left:63px;top:741.00px" width="12" height="14" viewBox="0 0 12 14"><path d="M0.5 13.5H11.5V6L6 0.5L0.5 6z" fill="#fff" stroke="#cdcdcd"/><path d="M3.5 8.5H8.5" stroke="#b8b8b8"/></svg>
</div>
<svg class="abs" style="left:0;top:0;pointer-events:none" width="1467" height="839" viewBox="0 0 1467 839"><polygon points="253.1,327.5 605.8,673.4 602.6,674.6 618.4,679.8 612.6,664.2 611.6,667.4 253.7,326.9" fill="#fb2016"/></svg>
</body></html>
